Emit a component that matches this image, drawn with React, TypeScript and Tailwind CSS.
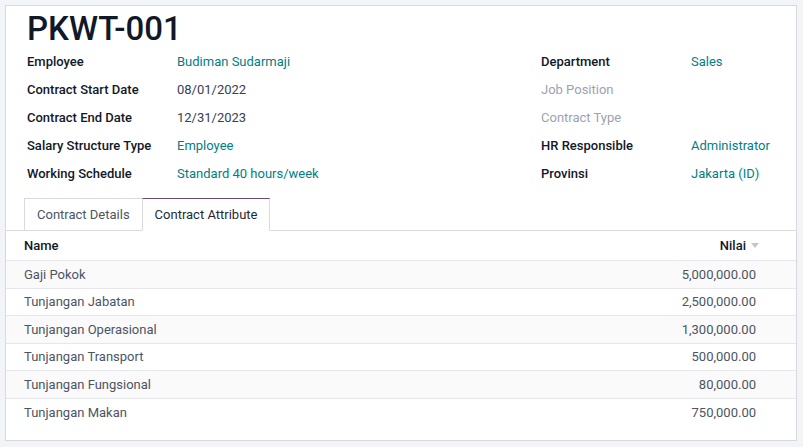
import { ReactNode } from "react";

const LEFT: { label: string; value: string; tone: "link" | "text" }[] = [
  { label: "Employee", value: "Budiman Sudarmaji", tone: "link" },
  { label: "Contract Start Date", value: "08/01/2022", tone: "text" },
  { label: "Contract End Date", value: "12/31/2023", tone: "text" },
  { label: "Salary Structure Type", value: "Employee", tone: "link" },
  { label: "Working Schedule", value: "Standard 40 hours/week", tone: "link" },
];

const RIGHT: { label: string; value: string; muted?: boolean }[] = [
  { label: "Department", value: "Sales" },
  { label: "Job Position", value: "", muted: true },
  { label: "Contract Type", value: "", muted: true },
  { label: "HR Responsible", value: "Administrator" },
  { label: "Provinsi", value: "Jakarta (ID)" },
];

const LINES = [
  { name: "Gaji Pokok", amount: "5,000,000.00" },
  { name: "Tunjangan Jabatan", amount: "2,500,000.00" },
  { name: "Tunjangan Operasional", amount: "1,300,000.00" },
  { name: "Tunjangan Transport", amount: "500,000.00" },
  { name: "Tunjangan Fungsional", amount: "80,000.00" },
  { name: "Tunjangan Makan", amount: "750,000.00" },
];

function Field({ label, children, muted }: { label: string; children?: ReactNode; muted?: boolean }) {
  return (
    <div className="flex h-[28px] items-center">
      <div className={`w-[150px] shrink-0 ${muted ? "text-[#9ca3af] font-normal" : "text-[#111827] font-medium"}`}>
        {label}
      </div>
      <div>{children}</div>
    </div>
  );
}

export default function App() {
  return (
    <div className="min-h-[447px] bg-[#f3f4f7] pl-[5px] pr-[6px] pt-[5px] pb-[6px] font-['Roboto',sans-serif] text-[13px]">
      <div className="h-[436px] border border-[#d8dadd] bg-white">
        {/* Title */}
        <h1 className="pl-[21px] pt-[4px] text-[33px] font-medium leading-[38px] text-[#111827]">PKWT-001</h1>

        {/* Fields */}
        <div className="flex pl-[21px]">
          <div className="w-[514px]">
            {LEFT.map((f) => (
              <Field key={f.label} label={f.label}>
                <span className={f.tone === "link" ? "text-[#017e84]" : "text-[#374151]"}>{f.value}</span>
              </Field>
            ))}
          </div>
          <div>
            {RIGHT.map((f) => (
              <Field key={f.label} label={f.label} muted={f.muted}>
                <span className="text-[#017e84]">{f.value}</span>
              </Field>
            ))}
          </div>
        </div>

        {/* Tabs */}
        <div className="mt-[10px] flex border-b border-[#d8dadd] pl-[18px]">
          <div className="-mb-px flex h-[33px] items-center border border-[#d8dadd] px-[12px] text-[#4b5563]">
            Contract Details
          </div>
          <div className="-mb-px -ml-px flex h-[33px] items-center border border-[#d8dadd] border-t-[#714b67] border-b-white bg-white px-[12px] text-[#1f2937]">
            Contract Attribute
          </div>
        </div>

        {/* Lines */}
        <div>
          <div className="flex h-[30px] items-center border-b border-[#e5e7eb] pl-[18px] pr-[37px] font-medium text-[#111827] shadow-[0_1px_2px_rgba(0,0,0,0.05)]">
            <div className="flex-1">Name</div>
            <div className="flex items-center gap-[5px]">
              Nilai
              <svg width="8" height="5" viewBox="0 0 8 5">
                <path d="M0 0h8L4 5z" fill="#c4c7cc" />
              </svg>
            </div>
          </div>
          {LINES.map((l, i) => (
            <div
              key={l.name}
              className={`flex h-[27.6px] items-center pl-[18px] pr-[40px] text-[#4b5563] ${i < LINES.length - 1 ? "border-b border-[#e5e7eb]" : ""} ${i % 2 === 0 ? "bg-[#fafafa]" : "bg-white"}`}
            >
              <div className="flex-1">{l.name}</div>
              <div>{l.amount}</div>
            </div>
          ))}
        </div>
      </div>
    </div>
  );
}
